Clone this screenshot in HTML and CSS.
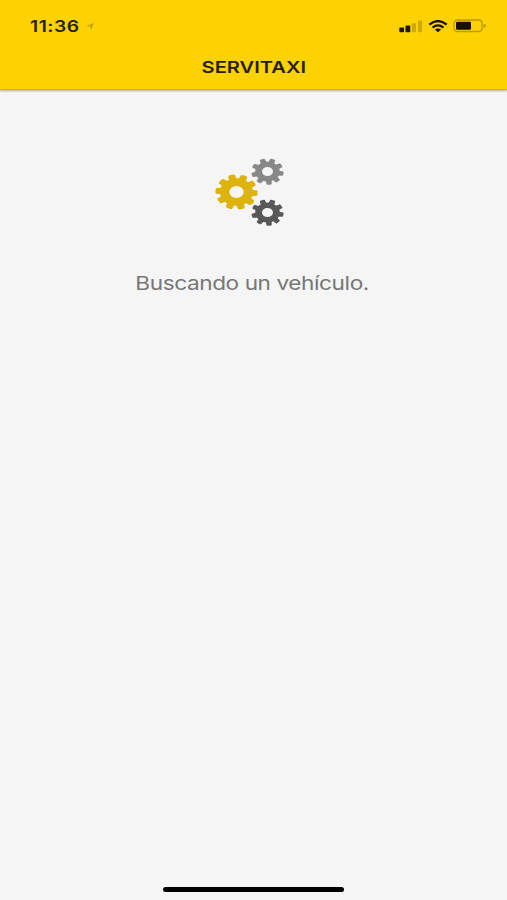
FILE: index.html
```html
<!DOCTYPE html>
<html lang="es">
<head>
<meta charset="utf-8">
<meta name="viewport" content="width=device-width, initial-scale=1">
<title>SERVITAXI</title>
<link rel="stylesheet" href="styles.css">
</head>
<body>
<svg class="defs" aria-hidden="true">
  <defs>
    <path id="tooth" d="M-3.4-11L-2.9-16.6Q-2.8-17.4-2-17.5Q0-17.8 2-17.5Q2.8-17.4 2.9-16.6L3.4-11Z"/>
    <symbol id="gear10" viewBox="-18 -18 36 36" preserveAspectRatio="none">
      <path fill-rule="evenodd" d="M-13.8 0A13.8 13.8 0 1 1 13.8 0A13.8 13.8 0 1 1-13.8 0ZM-6 0A6 6 0 1 0 6 0A6 6 0 1 0-6 0Z"/>
      <use href="#tooth" transform="rotate(-14)"/><use href="#tooth" transform="rotate(22)"/><use href="#tooth" transform="rotate(58)"/><use href="#tooth" transform="rotate(94)"/><use href="#tooth" transform="rotate(130)"/><use href="#tooth" transform="rotate(166)"/><use href="#tooth" transform="rotate(202)"/><use href="#tooth" transform="rotate(238)"/><use href="#tooth" transform="rotate(274)"/><use href="#tooth" transform="rotate(310)"/>
    </symbol>
    <symbol id="gear9" viewBox="-18 -18 36 36" preserveAspectRatio="none">
      <path fill-rule="evenodd" d="M-13.4 0A13.4 13.4 0 1 1 13.4 0A13.4 13.4 0 1 1-13.4 0ZM-6 0A6 6 0 1 0 6 0A6 6 0 1 0-6 0Z"/>
      <use href="#tooth" transform="rotate(-20)"/><use href="#tooth" transform="rotate(20)"/><use href="#tooth" transform="rotate(60)"/><use href="#tooth" transform="rotate(100)"/><use href="#tooth" transform="rotate(138)"/><use href="#tooth" transform="rotate(174)"/><use href="#tooth" transform="rotate(214)"/><use href="#tooth" transform="rotate(254)"/><use href="#tooth" transform="rotate(297)"/>
    </symbol>
  </defs>
</svg>
<div class="screen">
  <header class="header">
    <div class="status">
      <div class="clock">
        <span class="time">11:36</span>
        <svg class="location" width="10" height="9" viewBox="0 0 10 9"><path d="M1 4.2L9 .8L6 8L5.2 4.5Z"/></svg>
      </div>
      <div class="indicators">
        <svg width="24" height="13" viewBox="0 0 24 13"><g fill="#1d1800"><rect x=".3" y="7.6" width="4.8" height="4.6" rx="1"/><rect x="6.5" y="5.6" width="4.8" height="6.6" rx="1"/></g><g fill="#d0aa0a"><rect x="12.8" y="3.2" width="4.2" height="9" rx="1"/><rect x="19" y=".6" width="4.2" height="11.6" rx="1"/></g></svg>
        <svg class="wifi" width="20" height="13" viewBox="0 0 20 13"><path class="arc" d="M1.3 4.6Q10-2.5 18.7 4.6M4.6 7.6Q10 3.3 15.4 7.6"/><path d="M6.8 9.6Q10 7.4 13.2 9.6L10 12.3Z"/></svg>
        <svg class="battery" width="34" height="14" viewBox="0 0 34 14"><rect x="1" y="1" width="28" height="11.5" rx="3.2" fill="none" stroke="#bd990c" stroke-width="1.3"/><rect x="3" y="2.8" width="15" height="8" rx="1.2" fill="#171300"/><path d="M30.5 4.7Q33 5.2 33 6.8Q33 8.4 30.5 8.9Z" fill="#bd990c"/></svg>
      </div>
    </div>
    <h1 class="title"><span>SERVITAXI</span></h1>
  </header>
  <main class="content">
    <div class="gears">
      <svg class="gear main"><use href="#gear10"/></svg>
      <div class="pair">
        <svg class="gear light"><use href="#gear9"/></svg>
        <svg class="gear dark"><use href="#gear9"/></svg>
      </div>
    </div>
    <p class="message"><span>Buscando un vehículo.</span></p>
  </main>
  <div class="home"></div>
</div>
</body>
</html>
```
FILE: styles.css
```css
* { box-sizing: border-box; }
body { margin: 0; background: #f5f5f5; font-family: Inter, "Liberation Sans", sans-serif; }
svg { display: block; flex: none; }
.defs { position: absolute; width: 0; height: 0; }
.screen { width: 507px; height: 900px; display: flex; flex-direction: column; overflow: hidden; background: #f5f5f5; }
.header { height: 90px; flex: none; background: #fcd203; border-bottom: 1px solid #cdb240; box-shadow: 0 1px 2px rgba(0, 0, 0, .3); }
.status { height: 52px; padding: 0 20px 0 30px; display: flex; align-items: center; justify-content: space-between; }
.clock { display: flex; align-items: center; }
.time { width: 55px; font-size: 15.8px; line-height: 20px; letter-spacing: .4px; font-weight: 600; color: #271f00; transform: translateY(.6px) scaleX(1.22); transform-origin: left; }
.location { fill: #c49e0b; }
.indicators { display: flex; align-items: center; gap: 5px; }
.wifi { fill: #171300; }
.arc { fill: none; stroke: #171300; stroke-width: 2.2; }
.title { margin: 0; height: 30px; display: flex; align-items: center; justify-content: center; font-size: 16.5px; font-weight: 600; color: #271f00; }
.title span { transform: scaleX(1.22); }
.content { flex: 1; display: flex; flex-direction: column; align-items: center; padding-top: 68px; }
.gears { display: flex; align-items: center; height: 68px; margin-right: 8px; }
.gear { width: 33px; height: 27px; }
.main { width: 43px; height: 36px; fill: #dfb30e; margin-right: -7px; }
.pair { display: flex; flex-direction: column; gap: 14px; }
.light { fill: #888; }
.dark { fill: #585858; }
.message { margin: 46px 2px 0 0; font-size: 19px; line-height: 24px; letter-spacing: -.35px; color: #777; }
.message span { display: inline-block; transform: scaleX(1.19); }
.home { flex: none; align-self: center; width: 181px; height: 5px; margin-bottom: 8px; border-radius: 3px; background: #000; }
```
